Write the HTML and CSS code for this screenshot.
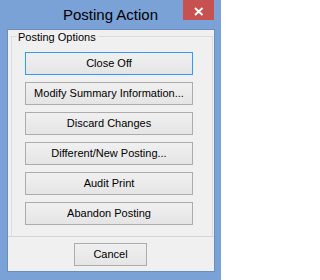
FILE: index.html
```html
<!DOCTYPE html>
<html>
<head>
<meta charset="utf-8">
<title>Posting Action</title>
<link rel="stylesheet" href="styles.css">
</head>
<body>
<div class="window">
  <div class="titlebar">
    <div class="title">Posting Action</div>
    <button class="close" aria-label="Close">
      <svg width="31" height="20" viewBox="0 0 31 20"><path d="M12 8 L19.5 15 M19.5 8 L12 15" stroke="#fff" stroke-width="1.9" fill="none"/></svg>
    </button>
  </div>
  <div class="client">
    <div class="group">
      <div class="group-head"><span class="legend">Posting Options</span></div>
      <div class="group-body">
        <button class="btn default">Close Off</button>
        <button class="btn">Modify Summary Information...</button>
        <button class="btn">Discard Changes</button>
        <button class="btn">Different/New Posting...</button>
        <button class="btn">Audit Print</button>
        <button class="btn">Abandon Posting</button>
      </div>
    </div>
    <div class="sep"></div>
    <div class="footer">
      <button class="btn cancel">Cancel</button>
    </div>
  </div>
</div>
</body>
</html>
```
FILE: styles.css
```css
* { box-sizing: border-box; }
html, body { margin: 0; padding: 0; }
body { width: 221px; height: 280px; overflow: hidden; font-family: "Liberation Sans", Arial, sans-serif; }

.window {
  width: 221px;
  height: 280px;
  background: #7aa2d6;
  display: flex;
  flex-direction: column;
}

.titlebar {
  height: 29px;
  flex: none;
  display: grid;
  grid-template-columns: 1fr auto 1fr;
}
.title {
  grid-column: 2;
  font-size: 15px;
  line-height: 29px;
  color: #000;
  white-space: nowrap;
}
.close {
  grid-column: 3;
  justify-self: end;
  align-self: start;
  width: 31px;
  height: 20px;
  margin: 0 7px 0 0;
  padding: 0;
  border: 0;
  background: #c75050;
  display: block;
}
.close svg { display: block; }

.client {
  flex: 1;
  margin: 0 6px 8px 7px;
  border: 1px solid #6a8ec2;
  background: #f0f0f0;
  display: flex;
  flex-direction: column;
}

.group {
  margin: 0 1px 0 3px;
  display: flex;
  flex-direction: column;
}
.group-head {
  height: 15px;
  display: flex;
  align-items: flex-end;
}
.group-head::before,
.group-head::after {
  content: "";
  height: 8px;
  border-top: 1px solid #dcdcdc;
}
.group-head::before {
  width: 5px;
  margin-right: 1px;
  border-left: 1px solid #dcdcdc;
}
.group-head::after {
  flex: 1;
  margin-left: 2px;
  border-right: 1px solid #dcdcdc;
}
.legend {
  align-self: stretch;
  font-size: 11px;
  line-height: 15px;
  color: #000;
  white-space: nowrap;
}
.group-body {
  height: 191px;
  border-left: 1px solid #dcdcdc;
  border-right: 1px solid #dcdcdc;
  padding: 7px 0 0 13px;
  display: flex;
  flex-direction: column;
  align-items: flex-start;
  gap: 7px;
}

.btn {
  width: 168px;
  height: 23px;
  margin: 0;
  padding: 0;
  border: 1px solid #acacac;
  background: linear-gradient(#f0f0f0, #e5e5e5);
  font-family: "Liberation Sans", Arial, sans-serif;
  font-size: 11px;
  line-height: 21px;
  color: #000;
  text-align: center;
  white-space: nowrap;
  display: block;
}
.btn.default {
  border-color: #3399ff;
}
.sep {
  height: 1px;
  flex: none;
  background: #d5d5d5;
}
.footer {
  display: flex;
  padding: 6px 0 0 66px;
}
.btn.cancel { width: 73px; }
```
